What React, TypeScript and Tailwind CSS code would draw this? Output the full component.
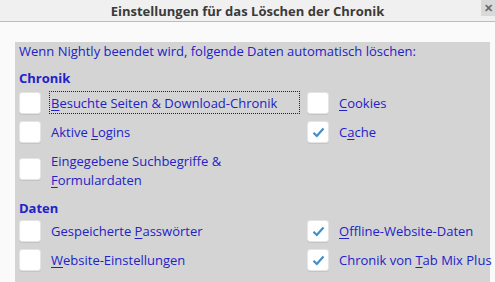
import type { JSX, ReactNode } from "react";

/* Checkbox box, optionally ticked */
const Box = ({ checked }: { checked?: boolean }): JSX.Element => {
  return (
    <div className="w-[22px] h-[22px] shrink-0 rounded-[3px] bg-white border border-[#e4e4e4] shadow-[0_1px_0_#c4c4c4] flex items-center justify-center">
      {checked && (
        <svg width="13" height="11" viewBox="0 0 13 11">
          <path
            d="M1.5 5.8 L4.8 9 L11.5 1.5"
            fill="none"
            stroke="#3d8fcb"
            strokeWidth="2.2"
          />
        </svg>
      )}
    </div>
  );
};

const U = ({ children }: { children: ReactNode }): JSX.Element => (
  <span className="underline underline-offset-2">{children}</span>
);

/* One checkbox row */
const Item = ({
  checked,
  focus,
  children,
}: {
  checked?: boolean;
  focus?: boolean;
  children: ReactNode;
}): JSX.Element => {
  return (
    <div className="flex items-center">
      <Box checked={checked} />
      <div
        className={
          focus
            ? "ml-[8px] w-[251px] h-[23px] pl-[1px] flex items-center border border-dotted border-[#1a1a80] whitespace-nowrap"
            : "ml-[10px] whitespace-nowrap"
        }
      >
        {children}
      </div>
    </div>
  );
};

export default function App(): JSX.Element {
  return (
    <div
      className="w-[495px] h-[282px] overflow-hidden bg-[#fafafa] text-[13px] leading-[18px] text-[#2222c8]"
      style={{ fontFamily: '"Open Sans", "Noto Sans", sans-serif' }}
    >
      {/* Title bar */}
      <div className="relative h-[22px] bg-[#f0f0f0] border-b border-[#bcbcbc] flex items-center justify-center">
        <span className="font-bold text-[#3a3a3a]">
          Einstellungen für das Löschen der Chronik
        </span>
        <div className="absolute right-0 top-0 w-[14px] h-[16px] bg-[#d9d9d9] flex items-center justify-center text-[#6a6a6a] text-[11px] font-bold">
          ✕
        </div>
      </div>

      {/* Panel */}
      <div className="mt-[20px] ml-[15px] w-[475px] h-[240px] bg-[#d4d4d4] pl-[4px]">
        <div className="whitespace-nowrap">
          Wenn Nightly beendet wird, folgende Daten automatisch löschen:
        </div>

        <div className="mt-[9px] font-bold">Chronik</div>
        <div className="mt-[4px] grid grid-cols-[288px_1fr]">
          <Item focus>
            <U>B</U>esuchte Seiten &amp; Download-Chronik
          </Item>
          <Item>
            <U>C</U>ookies
          </Item>
          <div className="mt-[7px]">
            <Item>
              Aktive <U>L</U>ogins
            </Item>
          </div>
          <div className="mt-[7px]">
            <Item checked>
              C<U>a</U>che
            </Item>
          </div>
          <div className="mt-[9px] flex items-start">
            <div className="mt-[6px]">
              <Box />
            </div>
            <div className="ml-[10px] leading-[19px]">
              Eingegebene Suchbegriffe &amp;
              <br />
              <U>F</U>ormulardaten
            </div>
          </div>
          <div />
        </div>

        <div className="mt-[9px] font-bold">Daten</div>
        <div className="mt-[3px] grid grid-cols-[288px_1fr]">
          <Item>
            Gespeicherte <U>P</U>asswörter
          </Item>
          <Item checked>
            <U>O</U>ffline-Website-Daten
          </Item>
          <div className="mt-[7px]">
            <Item>
              <U>W</U>ebsite-Einstellungen
            </Item>
          </div>
          <div className="mt-[7px]">
            <Item checked>
              Chronik von <U>T</U>ab Mix Plus
            </Item>
          </div>
        </div>
      </div>
    </div>
  );
}
